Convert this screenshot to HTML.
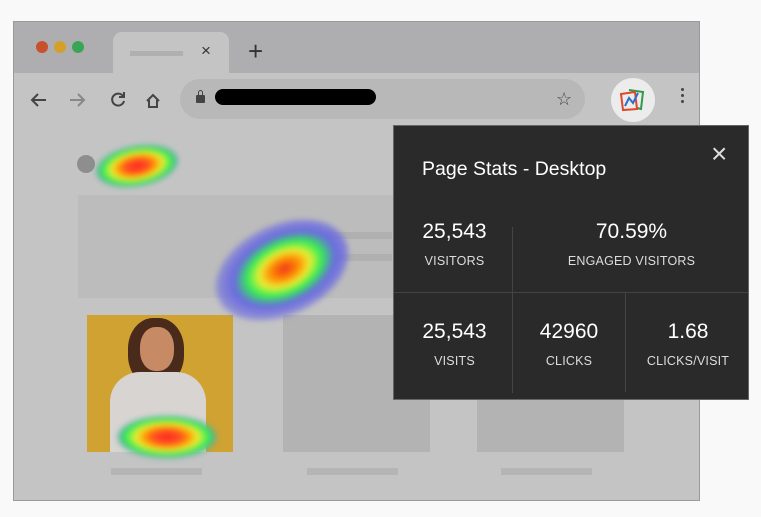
<!DOCTYPE html>
<html><head><style>
*{margin:0;padding:0;box-sizing:border-box}
body{width:761px;height:517px;background:#f9f9f9;position:relative;overflow:hidden;font-family:"Liberation Sans",sans-serif}
.a{position:absolute}
.hm{position:absolute;border-radius:50%;filter:blur(3px)}
.pop{left:393px;top:125px;width:356px;height:275px;background:#2a2a2a;border:1px solid #666;color:#fff}
.n{position:absolute;font-size:21px;text-align:center;color:#fff}
.l{position:absolute;font-size:12.5px;text-align:center;color:#ddd;letter-spacing:.2px}
</style></head><body>
<div class="a" style="left:13px;top:21px;width:687px;height:480px;background:#c4c4c4;border:1px solid #9a9a9a"></div>
<div class="a" style="left:14px;top:22px;width:685px;height:51px;background:#aeaeb0"></div>
<div class="a" style="left:36px;top:41px;width:12px;height:12px;border-radius:50%;background:#c9502c"></div>
<div class="a" style="left:54px;top:41px;width:12px;height:12px;border-radius:50%;background:#d4a02a"></div>
<div class="a" style="left:72px;top:41px;width:12px;height:12px;border-radius:50%;background:#3aa556"></div>
<div class="a" style="left:113px;top:32px;width:116px;height:42px;background:#c4c4c4;border-radius:9px 9px 0 0"></div>
<div class="a" style="left:130px;top:51px;width:53px;height:5px;background:#b0b0b0"></div>
<div class="a" style="left:201px;top:41px;font-size:17px;color:#333">×</div>
<div class="a" style="left:248px;top:36px;font-size:26px;color:#333;font-weight:300">+</div>
<div class="a" style="left:180px;top:79px;width:405px;height:40px;border-radius:20px;background:#b8b8b8"></div>
<svg class="a" style="left:28px;top:88px" width="150" height="24" fill="none" stroke-width="2">
<path d="M18 12H4M10 6l-6 6 6 6" stroke="#444"/>
<path d="M42 12h14M50 6l6 6-6 6" stroke="#888"/>
<path d="M95 8a6 6 0 1 0 1 5M96 4v5h-5" stroke="#444"/>
<path d="M119 13l6-6 6 6M121 12v7h8v-7" stroke="#444"/>
</svg>
<div class="a" style="left:196px;top:95px;width:9px;height:8px;background:#444;border-radius:1px"></div>
<div class="a" style="left:198px;top:90px;width:5px;height:7px;border:1.5px solid #444;border-radius:3px 3px 0 0"></div>
<div class="a" style="left:215px;top:89px;width:161px;height:16px;background:#000;border-radius:8px"></div>
<div class="a" style="left:556px;top:89px;font-size:18px;color:#444">☆</div>
<div class="a" style="left:611px;top:78px;width:44px;height:44px;border-radius:50%;background:#ececec"></div>
<svg class="a" style="left:618px;top:86px" width="30" height="28" fill="none" stroke-width="2">
<path d="M11 4l14 2-2 17-4-1" stroke="#2e9a4a"/>
<path d="M3 8l14-2 2 17-14 1z" stroke="#e0482a"/>
<path d="M7 20l4-8 4 5 5-10" stroke="#2e6fc7"/>
</svg>
<div class="a" style="left:681px;top:88px;width:3px;height:3px;background:#444;box-shadow:0 6px #444,0 12px #444;border-radius:50%"></div>

<div class="a" style="left:77px;top:155px;width:18px;height:18px;border-radius:50%;background:#8e8e8e"></div>
<div class="a" style="left:78px;top:195px;width:320px;height:103px;background:#bcbcbc"></div>
<div class="a" style="left:300px;top:232px;width:92px;height:7px;background:#b0b0b0"></div>
<div class="a" style="left:300px;top:254px;width:92px;height:7px;background:#b0b0b0"></div>
<div class="a" style="left:87px;top:315px;width:146px;height:137px;background:#cfa232"></div>
<div class="a" style="left:128px;top:318px;width:56px;height:68px;border-radius:45%;background:#4a2a1a"></div>
<div class="a" style="left:140px;top:327px;width:34px;height:44px;border-radius:45%;background:#c68a64"></div>
<div class="a" style="left:110px;top:372px;width:96px;height:80px;border-radius:30px 30px 0 0;background:#d8d4d2"></div>
<div class="a" style="left:283px;top:315px;width:147px;height:137px;background:#b3b3b3"></div>
<div class="a" style="left:477px;top:315px;width:147px;height:137px;background:#b3b3b3"></div>
<div class="a" style="left:111px;top:468px;width:91px;height:7px;background:#b5b5b5"></div>
<div class="a" style="left:307px;top:468px;width:91px;height:7px;background:#b5b5b5"></div>
<div class="a" style="left:501px;top:468px;width:91px;height:7px;background:#b5b5b5"></div>

<div class="hm" style="left:96px;top:146px;width:82px;height:40px;background:radial-gradient(ellipse,#f22 0,#f52 22%,#f90 32%,#ee3 45%,#3e5 60%,#7070e0 78%,transparent 100%);transform:rotate(-10deg)"></div>
<div class="hm" style="left:212px;top:225px;width:140px;height:90px;background:radial-gradient(ellipse at 52% 50%,#e32 0,#f80 14%,#ee3 26%,#3e5 38%,#6a6ae0 52%,rgba(110,110,224,.5) 72%,transparent 100%);transform:rotate(-25deg)"></div>
<div class="hm" style="left:118px;top:416px;width:98px;height:42px;background:radial-gradient(ellipse,#f22 0,#f52 22%,#f90 32%,#ee3 45%,#3e5 60%,#7070e0 78%,transparent 100%)"></div>

<div class="a pop">
<div class="a" style="left:28px;top:32px;font-size:19.5px">Page Stats - Desktop</div>
<div class="a" style="left:317px;top:12px;font-size:28px;color:#ddd;font-weight:300">×</div>
<div class="a" style="left:118px;top:101px;width:1px;height:166px;background:#444"></div>
<div class="a" style="left:0;top:166px;width:354px;height:1px;background:#444"></div>
<div class="a" style="left:231px;top:166px;width:1px;height:100px;background:#444"></div>
<div class="n" style="left:0;top:94px;width:121px">25,543</div>
<div class="l" style="left:0;top:128px;width:121px">VISITORS</div>
<div class="n" style="left:119px;top:94px;width:237px">70.59%</div>
<div class="l" style="left:119px;top:128px;width:237px">ENGAGED VISITORS</div>
<div class="n" style="left:0;top:194px;width:121px">25,543</div>
<div class="l" style="left:0;top:228px;width:121px">VISITS</div>
<div class="n" style="left:119px;top:194px;width:112px">42960</div>
<div class="l" style="left:119px;top:228px;width:112px">CLICKS</div>
<div class="n" style="left:232px;top:194px;width:124px">1.68</div>
<div class="l" style="left:232px;top:228px;width:124px">CLICKS/VISIT</div>
</div>
</body></html>
